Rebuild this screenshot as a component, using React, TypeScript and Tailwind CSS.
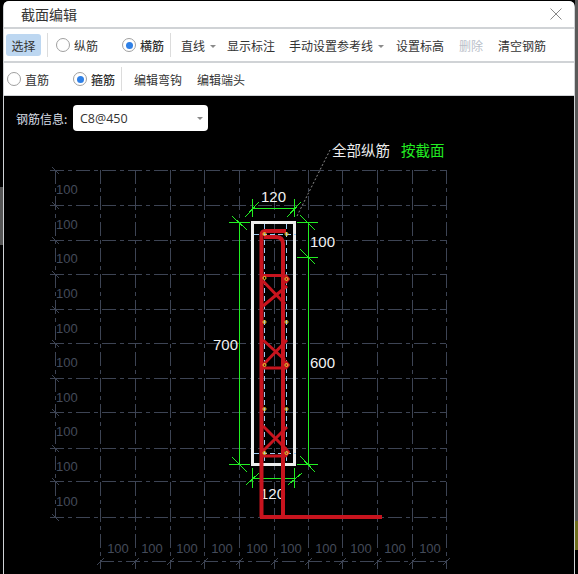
import React from "react";

const xs = [100, 135, 170, 204, 239, 274, 308, 342, 377, 412, 446];
const ys = [171, 206, 241, 275, 310, 344, 379, 413, 449, 482, 518];
const leftLabels = [195, 230, 264, 299, 334, 368, 403, 437, 472, 507];
const bottomLabels = [118, 152, 187, 222, 257, 291, 326, 361, 395, 430];
const dots: [number, number][] = [
  [264.5, 235], [286.5, 235], [264.5, 279], [286.5, 280], [264.5, 323], [286.5, 323],
  [264.5, 366], [286.5, 366], [264.5, 410], [286.5, 410], [264.5, 454], [286.5, 454],
];
const greenLines = [
  "M253 209H294", "M252.5 200V218", "M294.5 200V218", "M245 218L259 203", "M287 218L301 203",
  "M308.5 223V466", "M297 223.5H318", "M297 258.5H318", "M297 465.5H318",
  "M300 216L315 231", "M300 250L315 265", "M300 457L315 473",
  "M239.5 223V465", "M229 223.5H250", "M229 465.5H250", "M232 217L247 231", "M232 458L247 473",
  "M253 479.5H294", "M252.5 469V489", "M294.5 469V489", "M246 486L259 474", "M288 486L302 474",
];
const redMain = [
  "M261.5 518V236Q261.5 232 265.5 232H286",
  "M264 238H276Q283 238 283 245V518",
  "M260 518H382",
];
const redThin = [
  "M262 276.5H284M285 276L288.5 280L285 284",
  "M263 282L285 305M263 307L287 287",
  "M263 341L285 361M263 366L287 341",
  "M262 369H284M285 362L288.5 366L285 370",
  "M263 427L286 450M263 452L287 428",
  "M262 457H284M285 449L288.5 453L285 458",
];

function Radio({ on }: { on?: boolean }) {
  return (
    <span className="mb-[2px] flex h-[14px] w-[14px] shrink-0 items-center justify-center rounded-full border border-[#a0a0a0] bg-white">
      {on && <span className="h-[7px] w-[7px] rounded-full bg-[#2f80e6]" />}
    </span>
  );
}

function Sep({ className }: { className: string }) {
  return <span className={"mb-[2px] h-[24px] w-px shrink-0 bg-[#dcdcdc] " + className} />;
}

function Caret({ className }: { className: string }) {
  return <span className={"h-0 w-0 shrink-0 border-x-[3px] border-t-[3px] border-x-transparent border-t-[#8a8a8a] " + className} />;
}

export default function App() {
  return (
    <div
      className="flex h-[574px] w-[578px] overflow-hidden bg-black text-[12px] text-[#333]"
      style={{ fontFamily: '"Noto Sans CJK SC", "Noto Sans", sans-serif' }}
    >
      <div className="flex w-[3px] shrink-0 flex-col">
        <div className="h-[187px]" />
        <div className="h-[58px] bg-[#555]" />
      </div>
      <div className="mt-px flex h-[573px] w-[572px] shrink-0 flex-col overflow-hidden rounded-t-[6px] bg-[#d0d3d6] pl-px pr-px">
        <div className="flex h-[26px] shrink-0 items-center justify-between bg-white pl-[17px] pr-[12px] text-[14px]">
          <span>截面编辑</span>
          <svg width="12" height="12" viewBox="0 0 12 12" className="text-[#888]">
            <path d="M0.5 0.5L11.5 11.5M11.5 0.5L0.5 11.5" stroke="currentColor" strokeWidth="1" fill="none" />
          </svg>
        </div>
        <div className="mt-[2px] flex h-[32px] shrink-0 items-center bg-white pt-[2px]">
          <span className="mb-[2px] ml-[2px] flex h-[22px] w-[35px] items-center justify-center rounded-[3px] bg-[#bdd7f1] pt-[2px]">选择</span>
          <Sep className="ml-[6px]" />
          <span className="ml-[8px] flex"><Radio on={false} /></span>
          <span className="ml-[4px]">纵筋</span>
          <span className="ml-[24px] flex"><Radio on /></span>
          <span className="ml-[4px] font-medium">横筋</span>
          <Sep className="ml-[6px]" />
          <span className="ml-[10px]">直线</span>
          <Caret className="ml-[5px]" />
          <span className="ml-[11px]">显示标注</span>
          <span className="ml-[14px]">手动设置参考线</span>
          <Caret className="ml-[5px]" />
          <span className="ml-[12px]">设置标高</span>
          <span className="ml-[15px] text-[#b9c0c9]">删除</span>
          <span className="ml-[15px]">清空钢筋</span>
        </div>
        <div className="mt-[2px] flex h-[32px] shrink-0 items-center bg-white pt-[2px]">
          <span className="ml-[3px] flex"><Radio /></span>
          <span className="ml-[4px]">直筋</span>
          <span className="ml-[24px] flex"><Radio on /></span>
          <span className="ml-[4px] font-medium">箍筋</span>
          <Sep className="ml-[6px]" />
          <span className="ml-[12px]">编辑弯钩</span>
          <span className="ml-[15px]">编辑端头</span>
        </div>
        <div className="relative mt-px flex-1 bg-black">
          <svg className="absolute inset-0" width="570" height="477" viewBox="4 97 570 477" fill="none">
            <g stroke="#3d4454" strokeWidth="1" strokeDasharray="14 4 4 4" shapeRendering="crispEdges">
              {ys.map((y) => <path key={y} d={`M50 ${y + 0.5}H446`} />)}
              {xs.map((x) => <path key={x} d={`M${x + 0.5} 171V570`} />)}
              <path d="M55.5 171V518" />
              <path d="M100 562.5H446" />
            </g>
            <g stroke="#3d4454" strokeWidth="1">
              {ys.map((y) => <path key={y} d={`M52 ${y - 3}L59 ${y + 4}`} />)}
              {xs.map((x) => <path key={x} d={`M${x - 3} 566L${x + 4} 559`} />)}
            </g>
            <g fill="#444b5a" fontSize="13" style={{ fontFamily: '"Liberation Sans", sans-serif' }}>
              {leftLabels.map((y) => <text key={y} x="56" y={y}>100</text>)}
              {bottomLabels.map((x) => <text key={x} x={x} y="554" textAnchor="middle">100</text>)}
            </g>
            <g stroke="#22ee22" strokeWidth="1" shapeRendering="crispEdges">
              {greenLines.map((d) => <path key={d} d={d} />)}
            </g>
            <path d="M297 217L330 151" stroke="#8a8a8a" strokeDasharray="2 2" />
            <g fill="#f2f2f2" fontSize="15" style={{ fontFamily: '"Liberation Sans", sans-serif' }}>
              <text x="261" y="203">120</text>
              <text x="260" y="500">120</text>
              <text x="213" y="351">700</text>
              <text x="310" y="248">100</text>
              <text x="310" y="369">600</text>
            </g>
            <text x="332" y="157" fill="#eeeeee" fontSize="14.5">全部纵筋</text>
            <text x="401" y="157" fill="#22ee22" fontSize="14.5">按截面</text>
            <rect x="252.5" y="223.5" width="42" height="242" stroke="#eeeeee" strokeWidth="3" />
            <g stroke="#9cc8f0" strokeDasharray="5 3" shapeRendering="crispEdges">
              <path d="M264.5 225V465" />
              <path d="M286.5 225V465" />
              <path d="M254 235.5H296" />
              <path d="M254 454.5H296" />
            </g>
            <g stroke="#c8141e" strokeWidth="4" strokeLinejoin="round">
              {redMain.map((d) => <path key={d} d={d} />)}
            </g>
            <g stroke="#c8141e" strokeWidth="3" strokeLinejoin="round">
              {redThin.map((d) => <path key={d} d={d} />)}
            </g>
            <g stroke="#f2d230" strokeWidth="1">
              {dots.map(([x, y]) => <circle key={`${x}-${y}`} cx={x} cy={y} r="1.5" />)}
            </g>
          </svg>
          <div className="relative ml-[12px] mt-[9px] flex items-center">
            <span className="w-[57px] pt-[2px] text-[#d8dee6]">钢筋信息:</span>
            <div className="flex h-[26px] w-[135px] items-center justify-between rounded-[4px] bg-white pl-[7px] pr-[5px]">
              <span className="pt-[2px] text-[12.5px]" style={{ fontFamily: '"Open Sans", "Noto Sans", sans-serif' }}>C8@450</span>
              <Caret className="" />
            </div>
          </div>
        </div>
      </div>
      <div className="flex flex-1 flex-col bg-[#5a5a5a]">
        <div className="h-[492px]" />
        <div className="h-[29px]" />
        <div className="h-[29px] bg-[#6f6f20]" />
        <div className="h-[24px] bg-black" />
      </div>
    </div>
  );
}
